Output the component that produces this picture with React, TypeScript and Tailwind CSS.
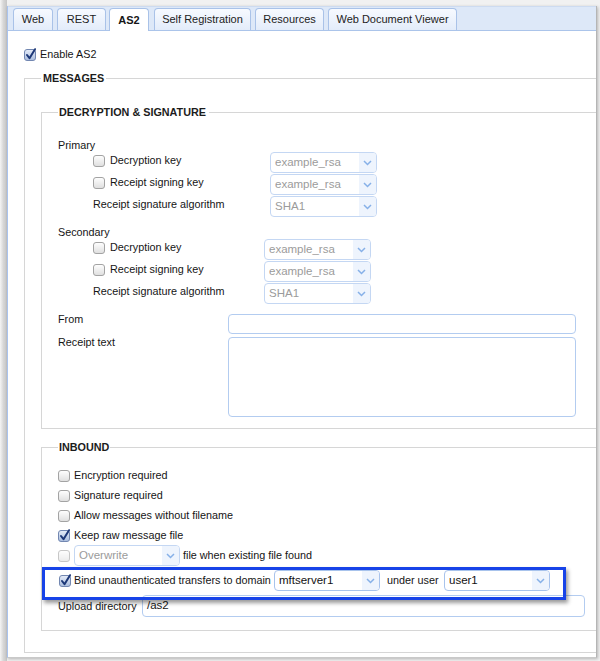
import React from "react";

function Check({ checked = false, disabled = false }: { checked?: boolean; disabled?: boolean }) {
  if (checked) {
    return (
      <svg width="13" height="13" viewBox="0 0 13 13" className="shrink-0">
        <defs>
          <linearGradient id="cbOn" x1="0" y1="0" x2="0" y2="1">
            <stop offset="0" stopColor="#e6edf9" />
            <stop offset="1" stopColor="#a9bcdd" />
          </linearGradient>
        </defs>
        <rect x="0.5" y="1.5" width="11" height="11" rx="2.5" fill="url(#cbOn)" stroke="#7287b1" />
        <path d="M3 7 L5.5 10.2 L11 1.2" fill="none" stroke="#1d3878" strokeWidth="2" strokeLinecap="round" strokeLinejoin="round" />
      </svg>
    );
  }
  return (
    <svg width="13" height="13" viewBox="0 0 13 13" className={"shrink-0 " + (disabled ? "opacity-60" : "")}>
      <defs>
        <linearGradient id="cbOff" x1="0" y1="0" x2="0" y2="1">
          <stop offset="0" stopColor="#ffffff" />
          <stop offset="1" stopColor="#dedede" />
        </linearGradient>
      </defs>
      <rect x="0.5" y="1.5" width="11" height="11" rx="2.5" fill="url(#cbOff)" stroke="#a3a3a3" />
    </svg>
  );
}

function Select({ value, muted = false, className = "" }: { value: string; muted?: boolean; className?: string }) {
  return (
    <div
      className={
        "flex h-[21px] shrink-0 overflow-hidden rounded-[4px] border bg-white " +
        (muted ? "border-[#c4d7f3] text-[#9b9b9b] " : "border-[#a8c3ec] text-[#111] ") +
        className
      }
    >
      <span className="flex-1 truncate pl-[4px] text-[11.5px] leading-[19px]">{value}</span>
      <span className="flex w-[17px] items-center justify-center bg-[#eef4fd]">
        <svg width="9" height="6" viewBox="0 0 9 6">
          <path d="M1 1 L4.5 4.5 L8 1" fill="none" stroke="#86b0e8" strokeWidth="1.5" />
        </svg>
      </span>
    </div>
  );
}

function KeyRow({ label, check, labelW }: { label: string; check?: boolean; labelW: string }) {
  return (
    <div className="flex h-[21px]">
      <div className={"flex items-start gap-[4px] pl-[35px] pt-[1px] leading-[14px] " + labelW}>
        {check && (
          <span className="mt-[1px]">
            <Check />
          </span>
        )}
        <span>{label}</span>
      </div>
      <Select value={label === "Receipt signature algorithm" ? "SHA1" : "example_rsa"} muted className="w-[107px]" />
    </div>
  );
}

function Tab({ label, active = false, className = "" }: { label: string; active?: boolean; className?: string }) {
  return (
    <div
      className={
        "rounded-t-[4px] border border-b-0 border-[#a9c2e8] text-center " +
        (active
          ? "mb-[-1px] h-[23px] bg-white font-bold leading-[22px] "
          : "h-[22px] bg-gradient-to-b from-[#f7faff] to-[#e3ecfa] leading-[21px] text-[#222] ") +
        className
      }
    >
      {label}
    </div>
  );
}

function CheckRow({ label, checked }: { label: string; checked?: boolean }) {
  return (
    <div className="flex h-[20px] items-center gap-[3px]">
      <Check checked={checked} />
      <span>{label}</span>
    </div>
  );
}

export default function App() {
  return (
    <div className="flex h-[661px] w-[600px] overflow-hidden bg-[#f1f1f1] font-['Liberation_Sans',Arial,sans-serif] text-[10.8px] text-[#151515]">
      {/* left edge of the window behind */}
      <div className="w-[7px] shrink-0 bg-gradient-to-r from-[#f5f5f5] via-[#d6d6d6] to-[#c6c6c6]" />

      <div className="mb-[3px] mr-[3px] mt-[6px] flex w-[590px] flex-col overflow-hidden border-b border-l border-r border-b-[#c9c9c9] border-l-[#a9c3ee] border-r-[#b5b5b5] bg-white shadow-[1px_1px_3px_rgba(0,0,0,0.25)]">
        {/* tabs */}
        <div className="flex h-[25px] shrink-0 items-end border-b border-t border-b-[#abc4ea] border-t-[#cddbf0] bg-[#dde8f8] text-[11px]">
          <Tab label="Web" className="ml-[5px] w-[40px]" />
          <Tab label="REST" className="ml-[4px] w-[49px]" />
          <Tab label="AS2" active className="ml-[3px] w-[40px]" />
          <Tab label="Self Registration" className="ml-[5px] w-[97px]" />
          <Tab label="Resources" className="ml-[4px] w-[69px]" />
          <Tab label="Web Document Viewer" className="ml-[4px] w-[129px]" />
        </div>

        <div className="flex flex-col pl-[16px] pt-[17px]">
          <div className="flex h-[13px] items-center gap-[3px]">
            <Check checked />
            <span>Enable AS2</span>
          </div>

          <fieldset className="mt-[10px] w-[590px] border border-[#d6d6d6] pb-[21px] pl-[16px] pt-[20px]">
            <legend className="px-[2px] font-bold leading-[14px] text-[#1c1c1c]">MESSAGES</legend>

            <fieldset className="w-[560px] border border-[#d6d6d6] pb-[11px] pl-[16px] pt-[19px]">
              <legend className="pl-[1px] pr-[3px] font-bold leading-[14px] text-[#1c1c1c]">DECRYPTION &amp; SIGNATURE</legend>

              <div className="leading-[14px]">Primary</div>
              <div className="flex flex-col gap-[1px]">
                <KeyRow label="Decryption key" check labelW="w-[212px]" />
                <KeyRow label="Receipt signing key" check labelW="w-[212px]" />
                <KeyRow label="Receipt signature algorithm" labelW="w-[212px]" />
              </div>

              <div className="mt-[8px] leading-[14px]">Secondary</div>
              <div className="flex flex-col gap-[1px]">
                <KeyRow label="Decryption key" check labelW="w-[206px]" />
                <KeyRow label="Receipt signing key" check labelW="w-[206px]" />
                <KeyRow label="Receipt signature algorithm" labelW="w-[206px]" />
              </div>

              <div className="mt-[10px] flex">
                <span className="w-[170px] leading-[11px]">From</span>
                <div className="h-[20px] w-[348px] rounded-[4px] border border-[#b3ccf0] bg-white" />
              </div>
              <div className="mt-[3px] flex">
                <span className="w-[170px] leading-[11px]">Receipt text</span>
                <div className="h-[80px] w-[348px] rounded-[4px] border border-[#b3ccf0] bg-white" />
              </div>
            </fieldset>

            <fieldset className="mt-[11px] w-[560px] border border-[#d6d6d6] pb-[13px] pl-[16px] pt-[11px]">
              <legend className="px-[1px] font-bold leading-[14px] text-[#1c1c1c]">INBOUND</legend>

              <CheckRow label="Encryption required" />
              <CheckRow label="Signature required" />
              <CheckRow label="Allow messages without filename" />
              <CheckRow label="Keep raw message file" checked />

              <div className="flex h-[21px] items-center">
                <Check disabled />
                <Select value="Overwrite" muted className="ml-[3px] w-[106px]" />
                <span className="ml-[3px]">file when existing file found</span>
              </div>

              <div className="relative mt-[2px] flex h-[25px] items-center">
                <span className="pl-[1px]">
                  <Check checked />
                </span>
                <span className="ml-[2px] w-[200px] whitespace-nowrap">Bind unauthenticated transfers to domain</span>
                <Select value="mftserver1" className="w-[106px]" />
                <span className="ml-[7px] w-[57px]">under user</span>
                <Select value="user1" className="w-[106px]" />
                {/* annotation highlight */}
                <div className="pointer-events-none absolute -left-[16px] -top-[1px] z-10 h-[33px] w-[524px] border-[3px] border-[#1743e8] shadow-[2px_3px_4px_rgba(0,0,0,0.4)]" />
              </div>

              <div className="mt-[2px] flex h-[22px] items-center">
                <span className="w-[84px]">Upload directory</span>
                <div className="flex h-[22px] w-[443px] items-center rounded-[4px] border border-[#b3ccf0] bg-white pl-[4px] text-[11.5px]">
                  /as2
                </div>
              </div>
            </fieldset>
          </fieldset>
        </div>
      </div>
    </div>
  );
}
